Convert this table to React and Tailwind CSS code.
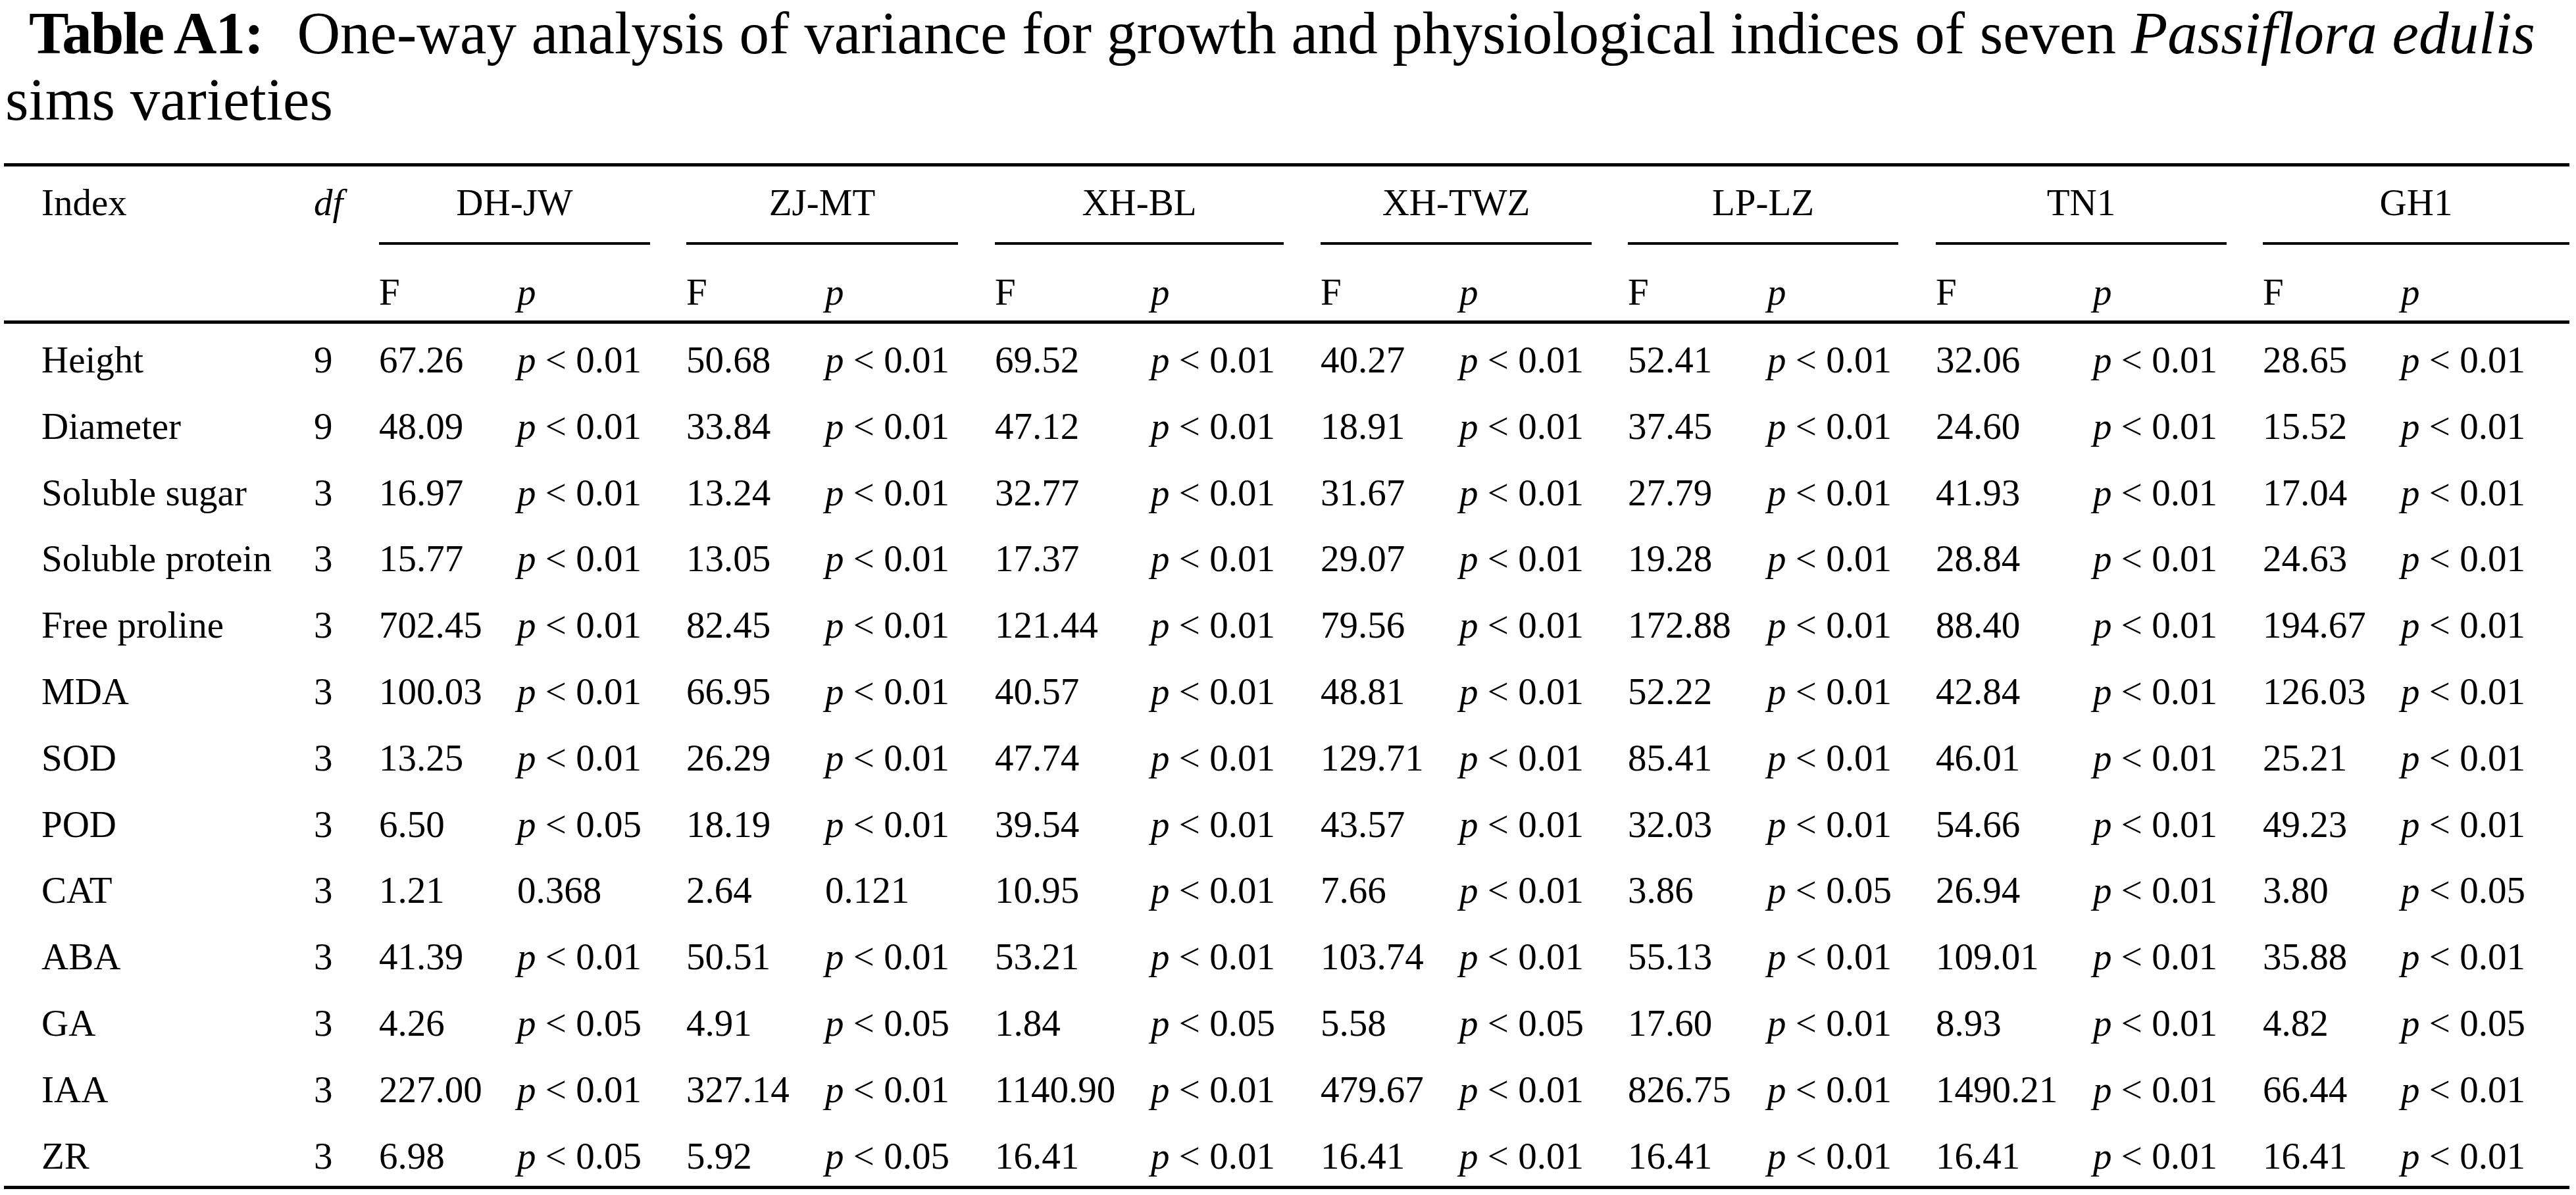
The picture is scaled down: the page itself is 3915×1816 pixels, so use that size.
import React from 'react'

const groups = [
  { name: 'DH-JW', pad: 'pr-[55px]' },
  { name: 'ZJ-MT', pad: 'pr-[56px]' },
  { name: 'XH-BL', pad: 'pr-[56px]' },
  { name: 'XH-TWZ', pad: 'pr-[55px]' },
  { name: 'LP-LZ', pad: 'pr-[57px]' },
  { name: 'TN1', pad: 'pr-[55px]' },
  { name: 'GH1', pad: 'pr-0' },
]

// each value pair: [F, p]  ('01' -> p < 0.01, '05' -> p < 0.05, anything else printed as is)
const rows = [
  { index: 'Height', df: 9, vals: [['67.26', '01'], ['50.68', '01'], ['69.52', '01'], ['40.27', '01'], ['52.41', '01'], ['32.06', '01'], ['28.65', '01']] },
  { index: 'Diameter', df: 9, vals: [['48.09', '01'], ['33.84', '01'], ['47.12', '01'], ['18.91', '01'], ['37.45', '01'], ['24.60', '01'], ['15.52', '01']] },
  { index: 'Soluble sugar', df: 3, vals: [['16.97', '01'], ['13.24', '01'], ['32.77', '01'], ['31.67', '01'], ['27.79', '01'], ['41.93', '01'], ['17.04', '01']] },
  { index: 'Soluble protein', df: 3, vals: [['15.77', '01'], ['13.05', '01'], ['17.37', '01'], ['29.07', '01'], ['19.28', '01'], ['28.84', '01'], ['24.63', '01']] },
  { index: 'Free proline', df: 3, vals: [['702.45', '01'], ['82.45', '01'], ['121.44', '01'], ['79.56', '01'], ['172.88', '01'], ['88.40', '01'], ['194.67', '01']] },
  { index: 'MDA', df: 3, vals: [['100.03', '01'], ['66.95', '01'], ['40.57', '01'], ['48.81', '01'], ['52.22', '01'], ['42.84', '01'], ['126.03', '01']] },
  { index: 'SOD', df: 3, vals: [['13.25', '01'], ['26.29', '01'], ['47.74', '01'], ['129.71', '01'], ['85.41', '01'], ['46.01', '01'], ['25.21', '01']] },
  { index: 'POD', df: 3, vals: [['6.50', '05'], ['18.19', '01'], ['39.54', '01'], ['43.57', '01'], ['32.03', '01'], ['54.66', '01'], ['49.23', '01']] },
  { index: 'CAT', df: 3, vals: [['1.21', '0.368'], ['2.64', '0.121'], ['10.95', '01'], ['7.66', '01'], ['3.86', '05'], ['26.94', '01'], ['3.80', '05']] },
  { index: 'ABA', df: 3, vals: [['41.39', '01'], ['50.51', '01'], ['53.21', '01'], ['103.74', '01'], ['55.13', '01'], ['109.01', '01'], ['35.88', '01']] },
  { index: 'GA', df: 3, vals: [['4.26', '05'], ['4.91', '05'], ['1.84', '05'], ['5.58', '05'], ['17.60', '01'], ['8.93', '01'], ['4.82', '05']] },
  { index: 'IAA', df: 3, vals: [['227.00', '01'], ['327.14', '01'], ['1140.90', '01'], ['479.67', '01'], ['826.75', '01'], ['1490.21', '01'], ['66.44', '01']] },
  { index: 'ZR', df: 3, vals: [['6.98', '05'], ['5.92', '05'], ['16.41', '01'], ['16.41', '01'], ['16.41', '01'], ['16.41', '01'], ['16.41', '01']] },
]

const PValue = ({ p }) => {
  if (p === '01' || p === '05') {
    return (
      <>
        <i>p</i> &lt; 0.{p}
      </>
    )
  }
  return <>{p}</>
}

const cell = 'h-[100.8px] pt-[23px] leading-[64px] whitespace-nowrap'

const App = () => {
  return (
    <div className="w-[3915px] h-[1816px] bg-white text-black overflow-hidden font-['Liberation_Serif',serif]">

      {/* Caption */}
      <div className="text-[91px]">
        <div className="h-[101px] leading-[101px] pl-[44px] whitespace-nowrap">
          <span className="font-bold tracking-[-2px]">Table A1:</span>
          <span className="ml-[52px]">
            One-way analysis of variance for growth and physiological indices of seven <i>Passiflora edulis</i>
          </span>
        </div>
        <div className="h-[101px] leading-[101px] pl-[8px] whitespace-nowrap">sims varieties</div>
      </div>

      {/* Table */}
      <div className="mt-[46px] ml-[6px] w-[3899px] text-[57px] grid grid-cols-[471px_99px_210px_257px_211px_258px_237px_258px_211px_256px_212px_256px_239px_258px_210px_256px]">
        <div className="col-span-full h-[5px] bg-black"></div>

        {/* group header */}
        <div className="pl-[57px] pt-[23px] leading-[64px]">Index</div>
        <div className="pt-[23px] leading-[64px]"><i>df</i></div>
        {groups.map((g) => (
          <div key={g.name} className={`col-span-2 ${g.pad}`}>
            <div className="pt-[23px] leading-[64px] text-center">{g.name}</div>
            <div className="mt-[28px] h-[4px] bg-black"></div>
          </div>
        ))}

        {/* F / p header */}
        <div className="pt-[40px] pb-[11px] leading-[64px]"></div>
        <div className="pt-[40px] pb-[11px] leading-[64px]"></div>
        {groups.map((g) => (
          <React.Fragment key={g.name}>
            <div className="pt-[40px] pb-[11px] leading-[64px]">F</div>
            <div className="pt-[40px] pb-[11px] leading-[64px]"><i>p</i></div>
          </React.Fragment>
        ))}

        <div className="col-span-full h-[5px] bg-black"></div>

        {/* body */}
        {rows.map((r) => (
          <React.Fragment key={r.index}>
            <div className={`${cell} pl-[57px]`}>{r.index}</div>
            <div className={cell}>{r.df}</div>
            {r.vals.map((v, i) => (
              <React.Fragment key={i}>
                <div className={cell}>{v[0]}</div>
                <div className={cell}><PValue p={v[1]} /></div>
              </React.Fragment>
            ))}
          </React.Fragment>
        ))}

        <div className="col-span-full h-[5px] bg-black"></div>
      </div>
    </div>
  )
}

export default App
